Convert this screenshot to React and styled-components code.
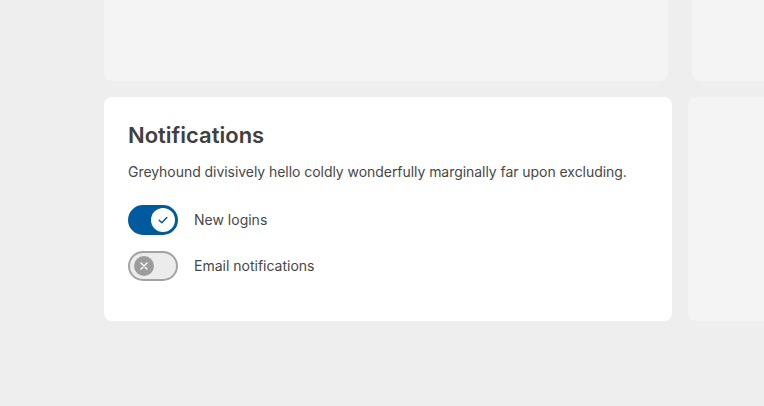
import React, { useState } from 'react';
import styled, { createGlobalStyle } from 'styled-components';

const Global = createGlobalStyle`
    html, body {
        margin: 0;
        background: #eeeeee;
        font-family: Inter, "Noto Sans", sans-serif;
        overflow: hidden;
    }
`;

const Page = styled.div`
    display: flex;
    flex-direction: column;
    gap: 16px;
    padding-left: 104px;
    margin-top: -120px;
    width: 900px;
`;

const Row = styled.div`
    display: flex;
    gap: ${props => props.gap}px;
`;

const Card = styled.div`
    flex: ${props => props.grow ? '1' : `0 0 ${props.width}px`};
    height: ${props => props.height ? `${props.height}px` : 'auto'};
    background: ${props => props.muted ? '#f4f4f4' : '#ffffff'};
    border-radius: 8px;
    box-sizing: border-box;
    padding: 24px 24px 40px 24px;
`;

const Title = styled.h2`
    margin: 0 0 12px 0;
    font-size: 22px;
    line-height: 28px;
    font-weight: 600;
    color: #404040;
`;

const Text = styled.p`
    margin: 0 0 24px 0;
    font-size: 14px;
    line-height: 20px;
    letter-spacing: -0.05px;
    color: #474747;
    padding-top: 1px;
`;

const List = styled.div`
    display: flex;
    flex-direction: column;
    gap: 16px;
    margin-top: -1px;
`;

const Item = styled.label`
    display: flex;
    align-items: center;
    gap: 16px;
    font-size: 14px;
    line-height: 18px;
    color: #474747;
    cursor: pointer;
`;

const Track = styled.button`
    position: relative;
    width: 50px;
    height: 30px;
    padding: 0;
    box-sizing: border-box;
    border-radius: 15px;
    border: 2px solid ${props => props.on ? '#005a9e' : '#a3a3a3'};
    background: ${props => props.on ? '#005a9e' : '#ececec'};
    cursor: pointer;
`;

const Knob = styled.span`
    position: absolute;
    top: 50%;
    left: ${props => props.on ? '21px' : '4px'};
    width: ${props => props.on ? '24px' : '20px'};
    height: ${props => props.on ? '24px' : '20px'};
    margin-top: ${props => props.on ? '-12px' : '-10px'};
    border-radius: 50%;
    background: ${props => props.on ? '#ffffff' : '#9c9c9c'};
    display: flex;
    align-items: center;
    justify-content: center;
`;

const Toggle = ({ on, onClick }) => (
    <Track on={on ? 1 : 0} onClick={onClick} type="button">
        <Knob on={on ? 1 : 0}>
            {on ? (
                <svg width="12" height="12" viewBox="0 0 12 12" fill="none">
                    <path d="M2.2 6.3 L4.8 8.8 L9.8 3.4" stroke="#005a9e" strokeWidth="1.4" strokeLinecap="round" strokeLinejoin="round" />
                </svg>
            ) : (
                <svg width="10" height="10" viewBox="0 0 10 10" fill="none">
                    <path d="M2 2 L8 8 M8 2 L2 8" stroke="#ffffff" strokeWidth="1.4" strokeLinecap="round" />
                </svg>
            )}
        </Knob>
    </Track>
);

const App = () => {
    const [logins, setLogins] = useState(true);
    const [email, setEmail] = useState(false);

    return (
        <>
            <Global />
            <Page>
                <Row gap={24}>
                    <Card muted width={564} height={201} />
                    <Card muted grow height={201} />
                </Row>
                <Row gap={16}>
                    <Card width={568}>
                        <Title>Notifications</Title>
                        <Text>Greyhound divisively hello coldly wonderfully marginally far upon excluding.</Text>
                        <List>
                            <Item>
                                <Toggle on={logins} onClick={() => setLogins(!logins)} />
                                New logins
                            </Item>
                            <Item>
                                <Toggle on={email} onClick={() => setEmail(!email)} />
                                Email notifications
                            </Item>
                        </List>
                    </Card>
                    <Card muted grow />
                </Row>
            </Page>
        </>
    );
};

export default App;
